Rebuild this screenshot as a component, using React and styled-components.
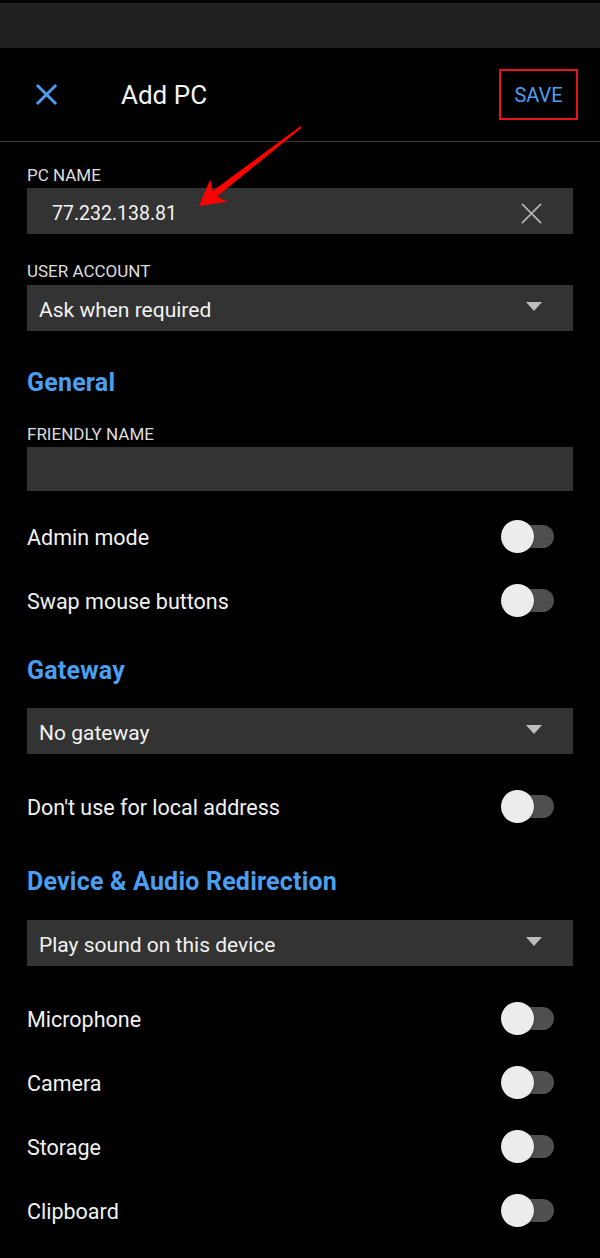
import React from "react";
import styled, { createGlobalStyle } from "styled-components";

const GlobalStyle = createGlobalStyle`
  html, body {
    margin: 0;
    padding: 0;
    background: #000;
  }
  body {
    font-family: Roboto, "Noto Sans", sans-serif;
    color: #f2f2f2;
  }
`;

const Page = styled.div`
  position: relative;
  width: 600px;
  height: 1258px;
  overflow: hidden;
  background: #000;
`;

const StatusBar = styled.div`
  height: 45px;
  margin-top: 3px;
  background: #202020;
`;

const Header = styled.header`
  height: 93px;
  display: flex;
  align-items: center;
  padding: 0 22px 0 35px;
  border-bottom: 1px solid #3d3d3d;
`;

const Title = styled.h1`
  margin: 0 0 0 63px;
  flex: 1;
  font-size: 26px;
  font-weight: 400;
  color: #f4f4f4;
`;

const SaveButton = styled.button`
  width: 79px;
  height: 51px;
  padding: 0;
  background: transparent;
  border: 2px solid #e8131b;
  color: #4b9ff0;
  font-family: inherit;
  font-size: 20px;
  cursor: pointer;
`;

const Content = styled.main`
  padding: 0 27px;
`;

const FieldLabel = styled.div`
  margin-top: ${(p) => p.$top}px;
  font-size: 17px;
  line-height: 20px;
  color: #dedede;
`;

const Box = styled.div`
  margin-top: ${(p) => p.$top}px;
  height: ${(p) => p.$height || 46}px;
  box-sizing: border-box;
  display: flex;
  align-items: center;
  padding: 4px 30px 0 ${(p) => p.$inset || 12}px;
  background: #333333;
  font-size: ${(p) => p.$size || 21}px;
  color: #f2f2f2;
`;

const BoxText = styled.span`
  flex: 1;
  white-space: nowrap;
`;

const Caret = styled.span`
  width: 0;
  height: 0;
  margin: -7px 1px 0 0;
  border-left: 8.5px solid transparent;
  border-right: 8.5px solid transparent;
  border-top: 9px solid #bdbdbd;
`;

const SectionTitle = styled.h2`
  margin: ${(p) => p.$top}px 0 0;
  font-size: 25px;
  line-height: 28px;
  letter-spacing: 0.2px;
  font-weight: 700;
  color: #4b9ff0;
`;

const Row = styled.div`
  margin-top: ${(p) => p.$top || 0}px;
  height: 64px;
  display: flex;
  align-items: center;
  justify-content: space-between;
  font-size: 21.5px;
  line-height: 26px;
  color: #f2f2f2;
`;

const RowLabel = styled.span`
  padding-top: 3px;
`;

const Switch = styled.span`
  position: relative;
  width: 44px;
  height: 23px;
  margin-right: 19px;
  border-radius: 12px;
  background: #4f4f4f;
`;

const Thumb = styled.span`
  position: absolute;
  left: -9px;
  top: -5px;
  width: 33px;
  height: 33px;
  border-radius: 50%;
  background: #ececec;
  box-shadow: 0 1px 2px rgba(0, 0, 0, 0.5);
`;

const Annotation = styled.svg`
  position: absolute;
  left: 0;
  top: 0;
  pointer-events: none;
`;

const CloseIcon = ({ size, color, width }) => (
  <svg width={size} height={size} viewBox="0 0 24 24">
    <path d="M2 2 L22 22 M22 2 L2 22" stroke={color} strokeWidth={width} fill="none" />
  </svg>
);

const Toggle = ({ label, top }) => (
  <Row $top={top}>
    <RowLabel>{label}</RowLabel>
    <Switch>
      <Thumb />
    </Switch>
  </Row>
);

const Dropdown = ({ value, top }) => (
  <Box $top={top}>
    <BoxText>{value}</BoxText>
    <Caret />
  </Box>
);

const App = () => (
  <Page>
    <GlobalStyle />
    <StatusBar />
    <Header>
      <CloseIcon size={23} color="#4b9ff0" width={3} />
      <Title>Add PC</Title>
      <SaveButton>SAVE</SaveButton>
    </Header>
    <Content>
      <FieldLabel $top={23}>PC NAME</FieldLabel>
      <Box $top={3} $inset={25} $size={19.5}>
        <BoxText>77.232.138.81</BoxText>
        <CloseIcon size={23} color="#b3b3b3" width={1.8} />
      </Box>

      <FieldLabel $top={27}>USER ACCOUNT</FieldLabel>
      <Dropdown top={4} value="Ask when required" />

      <SectionTitle $top={38}>General</SectionTitle>
      <FieldLabel $top={27}>FRIENDLY NAME</FieldLabel>
      <Box $top={3} $height={44} />
      <Toggle top={13} label="Admin mode" />
      <Toggle label="Swap mouse buttons" />

      <SectionTitle $top={25}>Gateway</SectionTitle>
      <Dropdown top={23} value="No gateway" />
      <Toggle top={20} label="Don't use for local address" />

      <SectionTitle $top={30}>Device &amp; Audio Redirection</SectionTitle>
      <Dropdown top={24} value="Play sound on this device" />
      <Toggle top={20} label="Microphone" />
      <Toggle label="Camera" />
      <Toggle label="Storage" />
      <Toggle label="Clipboard" />
      <Toggle label="" />
    </Content>

    <Annotation width="600" height="260" viewBox="0 0 600 260">
      <polygon
        points="300.4,126.2 212.7,191 210.2,179.6 199,206 227.3,201.8 216.9,196.6 301.6,127.8"
        fill="#ff0000"
      />
    </Annotation>
  </Page>
);

export default App;
